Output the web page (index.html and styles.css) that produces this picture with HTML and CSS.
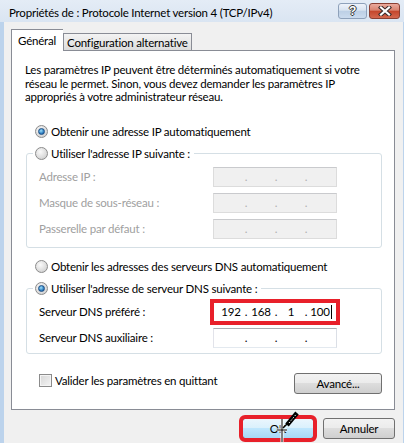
FILE: index.html
```html
<!DOCTYPE html>
<html lang="fr">
<head>
    <meta charset="UTF-8">
    <meta name="viewport" content="width=device-width, initial-scale=1.0">
    <title>Propriétés de : Protocole Internet version 4 (TCP/IPv4)</title>
    <link rel="stylesheet" href="styles.css">
</head>
<body>
    <div class="window">
        <div class="titlebar">
            <span class="title">Propriétés de : Protocole Internet version 4 (TCP/IPv4)</span>
            <div class="caption-buttons">
                <span class="cap-btn cap-help">?</span>
                <span class="cap-btn cap-close">
                    <svg width="14" height="10" viewBox="0 0 14 10">
                        <path d="M3 1.5 L11 8.5 M11 1.5 L3 8.5" stroke="#3b2a2a" stroke-width="4.2" stroke-linecap="square"/>
                        <path d="M3 1.5 L11 8.5 M11 1.5 L3 8.5" stroke="#fff" stroke-width="2.2" stroke-linecap="square"/>
                    </svg>
                </span>
            </div>
        </div>

        <div class="frame">
            <div class="client">
                <div class="tabs">
                    <span class="tab tab-active">Général</span>
                    <span class="tab">Configuration alternative</span>
                </div>

                <div class="panel">
                    <p class="intro">Les paramètres IP peuvent être déterminés automatiquement si votre<br>réseau le permet. Sinon, vous devez demander les paramètres IP<br>appropriés à votre administrateur réseau.</p>

                    <div class="option"><span class="radio radio-on"></span>Obtenir une adresse IP automatiquement</div>

                    <fieldset class="group group-ip">
                        <legend class="legend"><span class="radio"></span>Utiliser l'adresse IP suivante :</legend>
                        <div class="rows">
                            <div class="row row-disabled">
                                <span>Adresse IP :</span>
                                <span class="ipbox ipbox-disabled"><span class="seg"></span><span class="dot">.</span><span class="seg"></span><span class="dot">.</span><span class="seg"></span><span class="dot">.</span><span class="seg"></span></span>
                            </div>
                            <div class="row row-disabled">
                                <span>Masque de sous-réseau :</span>
                                <span class="ipbox ipbox-disabled"><span class="seg"></span><span class="dot">.</span><span class="seg"></span><span class="dot">.</span><span class="seg"></span><span class="dot">.</span><span class="seg"></span></span>
                            </div>
                            <div class="row row-disabled">
                                <span>Passerelle par défaut :</span>
                                <span class="ipbox ipbox-disabled"><span class="seg"></span><span class="dot">.</span><span class="seg"></span><span class="dot">.</span><span class="seg"></span><span class="dot">.</span><span class="seg"></span></span>
                            </div>
                        </div>
                    </fieldset>

                    <div class="option option-dns"><span class="radio"></span>Obtenir les adresses des serveurs DNS automatiquement</div>

                    <fieldset class="group group-dns">
                        <legend class="legend"><span class="radio radio-on"></span>Utiliser l'adresse de serveur DNS suivante :</legend>
                        <div class="rows">
                            <div class="row">
                                <span>Serveur DNS préféré :</span>
                                <span class="ipbox marked"><span class="seg">192</span><span class="dot">.</span><span class="seg">168</span><span class="dot">.</span><span class="seg">1</span><span class="dot">.</span><span class="seg">100<span class="caret"></span></span></span>
                            </div>
                            <div class="row">
                                <span>Serveur DNS auxiliaire :</span>
                                <span class="ipbox"><span class="seg"></span><span class="dot">.</span><span class="seg"></span><span class="dot">.</span><span class="seg"></span><span class="dot">.</span><span class="seg"></span></span>
                            </div>
                        </div>
                    </fieldset>

                    <div class="panel-foot">
                        <div class="check"><span class="checkbox"></span>Valider les paramètres en quittant</div>
                        <button class="btn btn-advanced">Avancé...</button>
                    </div>
                </div>

                <div class="dialog-buttons">
                    <button class="btn btn-default marked">OK</button>
                    <button class="btn">Annuler</button>
                    <!-- mouse cursor over the OK button -->
                    <svg class="cursor" width="26" height="34" viewBox="0 0 26 34">
                        <path d="M7 8 L7 31 M2 19 L12 19" stroke="#fff" stroke-width="3"/>
                        <path d="M7 8 L7 31 M2 19 L12 19" stroke="#000" stroke-width="1"/>
                        <path d="M8 17 L12 13" stroke="#000" stroke-width="1.5"/>
                        <path d="M12 14 L22 2" stroke="#000" stroke-width="4.5"/>
                        <path d="M14 12 L21 3.5" stroke="#fff" stroke-width="1" stroke-dasharray="1.5 1.5"/>
                    </svg>
                </div>
            </div>
        </div>
    </div>
</body>
</html>
```

FILE: styles.css
```css
body {
    margin: 0;
    font-family: Lato, "Liberation Sans", sans-serif;
    font-size: 11.5px;
    letter-spacing: -0.2px;
    color: #000;
}

.window {
    width: 404px;
    height: 443px;
    overflow: hidden;
    background: #bcd3ec;
}

/* title bar */

.titlebar {
    height: 22px;
    display: flex;
    justify-content: space-between;
    padding: 0 4px 0 9px;
    background: linear-gradient(#e4ecf6, #dae5f2);
}

.title {
    line-height: 25px;
    font-size: 11.5px;
}

.caption-buttons {
    display: flex;
    gap: 2px;
    margin-top: 3px;
}

.cap-btn {
    height: 14px;
    border: 1px solid #8ea1ba;
    border-radius: 3px;
    display: flex;
    align-items: center;
    justify-content: center;
}

.cap-help {
    width: 27px;
    background: linear-gradient(#eef3fa, #d8e3f0 45%, #bccfe5 50%, #cbdbee);
    color: #fff;
    font-family: "Liberation Sans", sans-serif;
    font-weight: bold;
    font-size: 12px;
    text-shadow: 1px 0 #333, -1px 0 #333, 0 1px #333, 0 -1px #333;
}

.cap-close {
    width: 29px;
    border-color: #8a3f33;
    background: linear-gradient(#eaa99c, #d8826f 45%, #c4452b 50%, #d3674e);
}

/* client area */

.frame {
    display: flex;
    height: 421px;
    padding: 0 1px 0 4px;
}

.client {
    flex: 1;
    background: #f0f0f0;
    padding: 7px 8px 0 7px;
}

.tabs {
    display: flex;
    align-items: flex-end;
    margin-bottom: -1px;
    position: relative;
    z-index: 1;
}

.tab {
    height: 16px;
    line-height: 18px;
    padding: 0 3px;
    margin-bottom: 1px;
    border: 1px solid #898c95;
    border-bottom: none;
    background: linear-gradient(#f3f3f3, #e8e8e8 50%, #dcdcdc);
}

.tab-active {
    height: 21px;
    line-height: 22px;
    padding: 0 7px 0 6px;
    margin-bottom: 0;
    border-right: none;
    background: #fff;
}

.panel {
    height: 360px;
    box-sizing: border-box;
    background: #fff;
    border: 1px solid #898c95;
    padding: 12px 12px 0 13px;
}

.intro {
    margin: 0 0 20px;
    line-height: 13.5px;
}

.option,
.legend {
    display: flex;
    align-items: center;
    gap: 3px;
    height: 16px;
}

.option {
    padding-left: 10px;
}

.option-dns {
    margin-top: 11px;
}

.radio {
    width: 11px;
    height: 11px;
    border: 1px solid #8b8b8b;
    border-radius: 50%;
    background: radial-gradient(circle at 40% 35%, #fafafa, #dcdcdc 60%, #c4c4c4);
    display: flex;
    align-items: center;
    justify-content: center;
}

.radio-on::after {
    content: "";
    width: 5px;
    height: 5px;
    border-radius: 50%;
    background: radial-gradient(circle at 40% 35%, #9ee0fb, #2f7fc1 60%, #14467f);
    border: 1px solid #1d4f86;
}

.group {
    margin: 6px 0 0 1px;
    padding: 5px 0 8px 6px;
    border: 1px solid #d5dfe5;
    border-radius: 3px;
    min-width: 0;
}

.group-dns {
    padding-bottom: 5px;
}

.legend {
    padding: 0 4px 0 2px;
}

.rows {
    display: grid;
    gap: 6px;
}

.row {
    display: grid;
    grid-template-columns: 174px 124px;
    align-items: center;
    height: 20px;
    padding-left: 6px;
}

.row-disabled {
    color: #a0a0a0;
}

.ipbox {
    height: 20px;
    box-sizing: border-box;
    display: flex;
    align-items: center;
    padding-left: 4px;
    background: #fff;
    border: 1px solid;
    border-color: #abadb3 #dbdfe6 #e3e9ef #e2e3ea;
}

.ipbox-disabled {
    background: #f0f0f0;
    border-color: #c9cacd #dcdcdc #dcdcdc #dcdcdc;
    color: #b0b0b0;
}

.seg {
    width: 26px;
    text-align: center;
}

.dot {
    width: 4px;
    text-align: center;
}

.caret {
    display: inline-block;
    width: 1px;
    height: 14px;
    margin-left: 1px;
    background: #000;
    vertical-align: -3px;
}

.marked {
    outline: 4px solid #e8202a;
    outline-offset: -1px;
}

/* bottom of the tab */

.panel-foot {
    display: flex;
    justify-content: space-between;
    align-items: flex-start;
    margin-top: 19px;
    padding-left: 14px;
}

.check {
    display: flex;
    align-items: center;
    gap: 3px;
    margin-top: 1px;
}

.checkbox {
    width: 11px;
    height: 11px;
    border: 1px solid #8b8b8b;
    background: linear-gradient(135deg, #d6d6d6, #f4f4f4);
    box-shadow: inset 0 0 0 1px #f4f4f4;
}

.btn {
    width: 72px;
    height: 21px;
    padding: 0;
    font-family: inherit;
    font-size: 11.5px;
    letter-spacing: inherit;
    color: #000;
    border: 1px solid #707070;
    border-radius: 3px;
    background: linear-gradient(#f2f2f2, #ebebeb 50%, #dddddd 50%, #cfcfcf);
}

.btn-advanced {
    width: 88px;
}

.btn-default {
    border-color: #3c7fb1;
    background: linear-gradient(#eaf6fd, #d9f0fc 50%, #bee6fd 50%, #a7d9f5);
}

.dialog-buttons {
    position: relative;
    display: flex;
    justify-content: flex-end;
    gap: 9px;
    margin-top: 8px;
}

.cursor {
    position: absolute;
    left: 264px;
    top: -7px;
}
```
